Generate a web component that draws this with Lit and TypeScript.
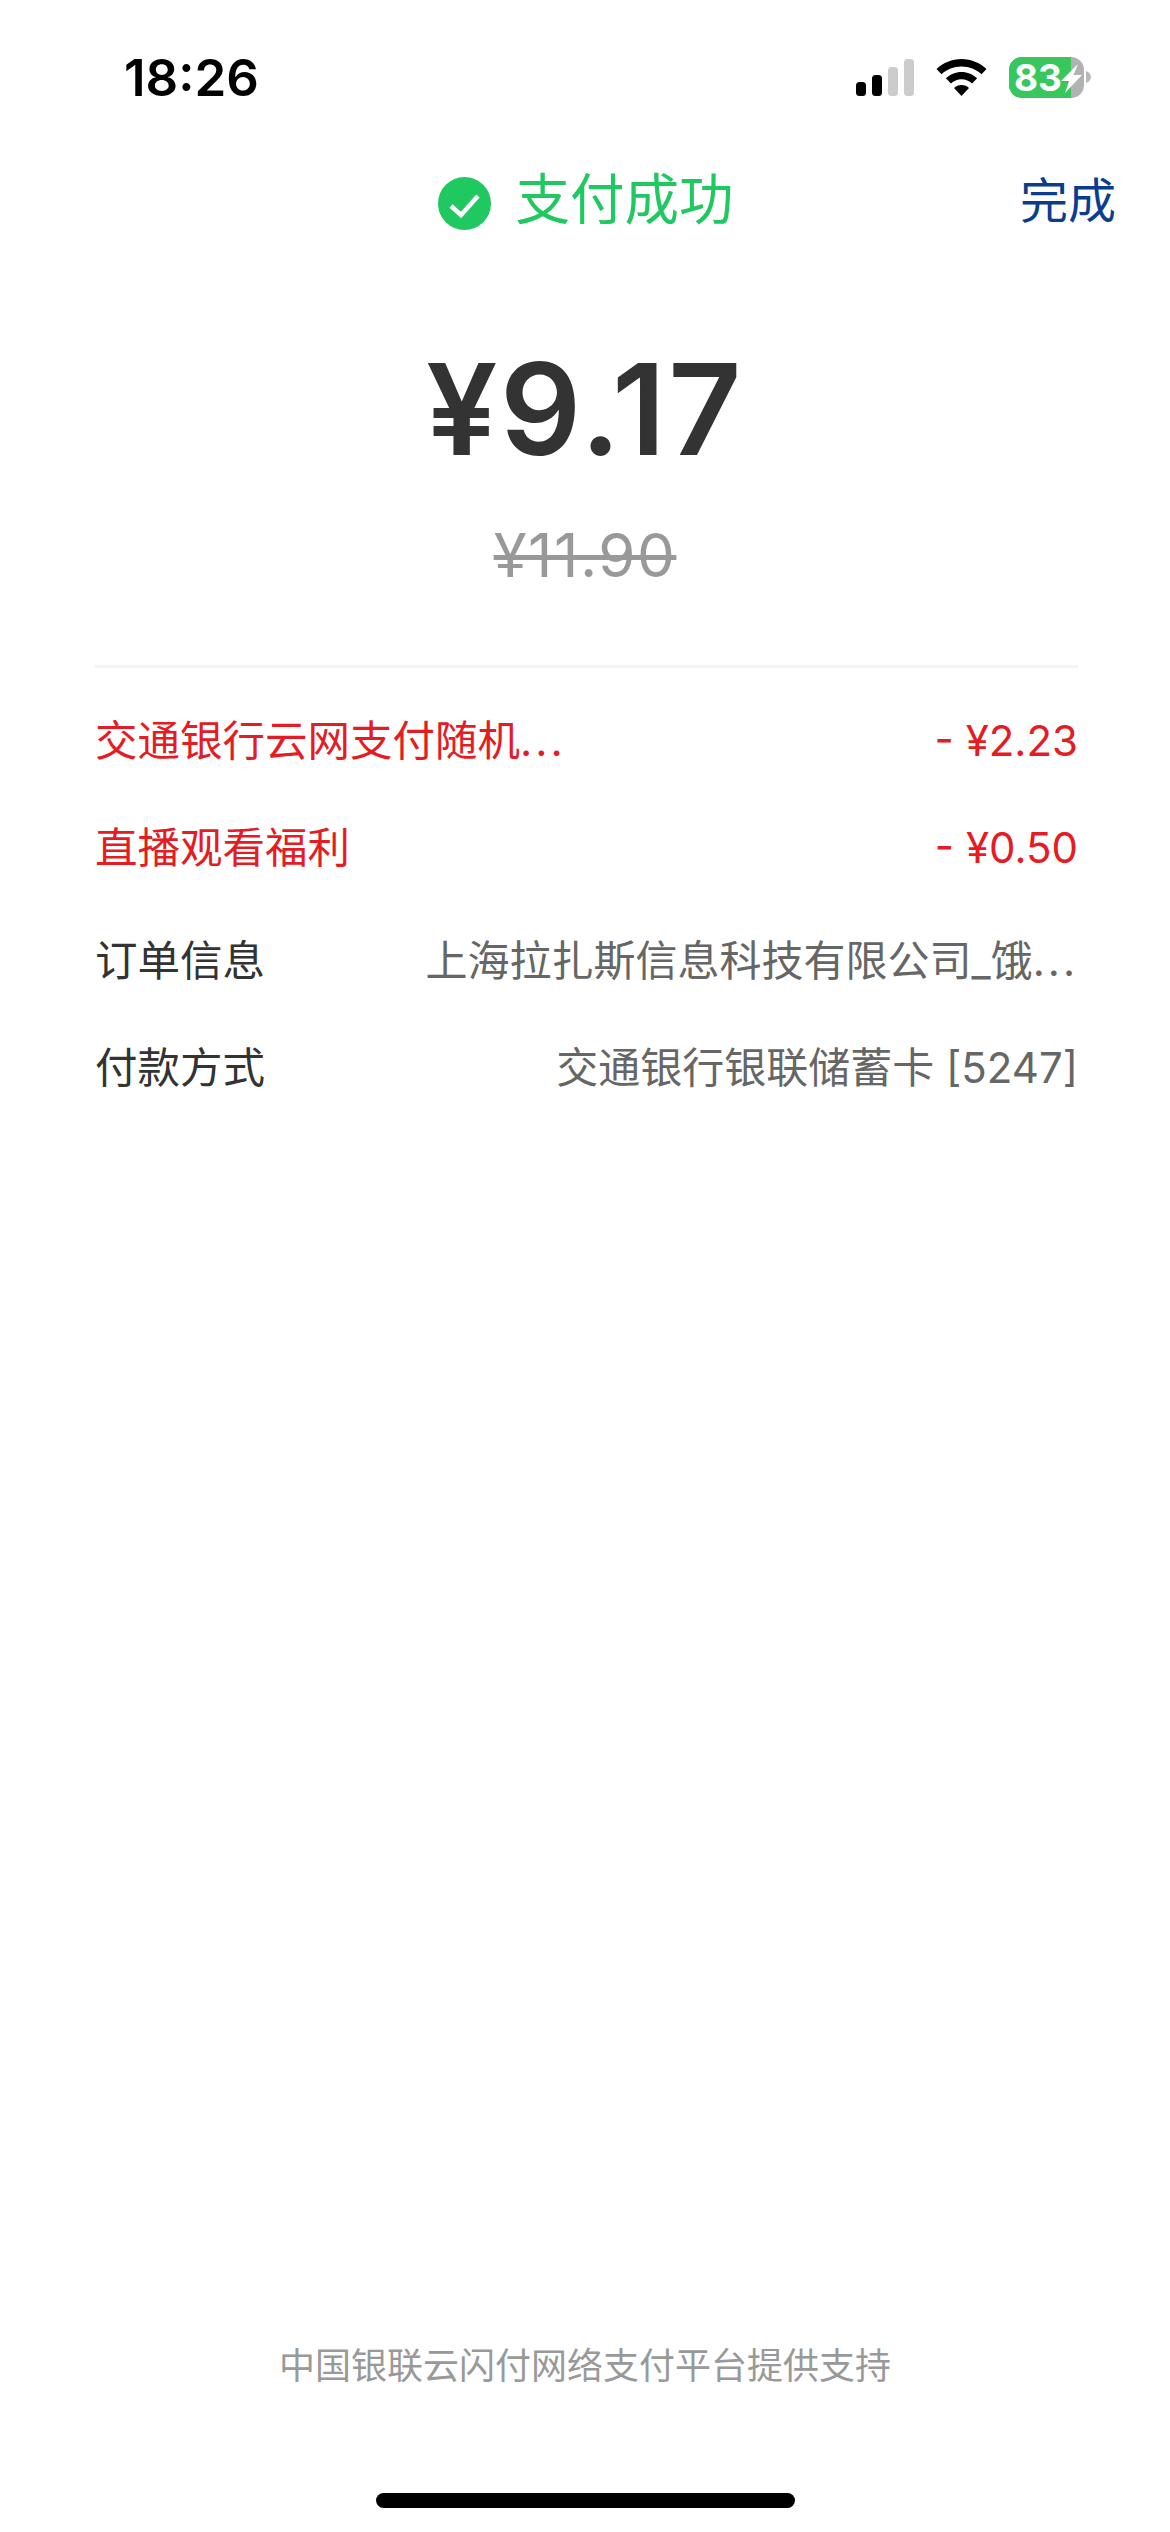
import { LitElement, html, css } from "lit";
import { customElement } from "lit/decorators.js";

interface Row {
  label: string;
  value: string;
  tone: "red" | "info";
  labelCut?: boolean;
  valueCut?: boolean;
}

const rows: Row[] = [
  { label: "交通银行云网支付随机", value: "- ¥2.23", tone: "red", labelCut: true },
  { label: "直播观看福利", value: "- ¥0.50", tone: "red" },
  { label: "订单信息", value: "上海拉扎斯信息科技有限公司_饿", tone: "info", valueCut: true },
  { label: "付款方式", value: "交通银行银联储蓄卡 [5247]", tone: "info" },
];

@customElement("app-root")
export class AppRoot extends LitElement {
  static styles = css`
    :host {
      display: block;
      width: 1170px;
      height: 2532px;
      background: #fff;
      font-family: Inter, "Noto Sans CJK SC", sans-serif;
      overflow: hidden;
    }
    .page { display: flex; flex-direction: column; height: 2532px; }
    .status {
      display: flex;
      justify-content: space-between;
      align-items: flex-start;
      height: 120px;
      padding: 38px 79px 0 124px;
      box-sizing: border-box;
    }
    .time { font-size: 51px; font-weight: 600; color: #000; line-height: 80px; }
    .sys { display: block; margin-top: 18px; }
    .head {
      display: grid;
      grid-template-columns: 1fr auto 1fr;
      align-items: center;
      height: 80px;
      margin-top: 37px;
    }
    .head-main { grid-column: 2; display: flex; align-items: center; gap: 24px; padding-left: 2px; }
    .check { width: 53px; height: 53px; display: block; margin-top: 8px; }
    .title { font-size: 54.5px; color: #1fc860; line-height: 80px; }
    .done {
      justify-self: end;
      padding-right: 54px;
      font-size: 48px;
      line-height: 80px;
      color: #0b3d8f;
      margin-top: 4px;
    }
    .amount {
      margin-top: 97px;
      text-align: center;
      font-size: 127px;
      font-weight: 600;
      line-height: 150px;
      letter-spacing: 2.5px;
      color: #333;
    }
    .orig {
      margin-top: 31px;
      text-align: center;
      font-size: 60px;
      line-height: 80px;
      letter-spacing: 1.5px;
      color: #999;
      text-decoration: line-through;
      text-decoration-thickness: 5px;
    }
    .list {
      margin: 70px 92px 0 95px;
      border-top: 3px solid #f3f3f3;
      padding-top: 43px;
      display: flex;
      flex-direction: column;
      gap: 47px;
    }
    .row {
      display: flex;
      justify-content: space-between;
      align-items: center;
      font-size: 42.5px;
      line-height: 60px;
      white-space: nowrap;
    }
    .val { font-size: 42px; }
    .row.info { color: #666; }
    .row.info .label { color: #333; }
    .row.red { color: #e41c24; }
    .row.info:nth-child(3) { margin-top: 6px; }
    .dots { letter-spacing: 3px; }
    .spacer { flex: 1; }
    .foot { text-align: center; font-size: 36px; line-height: 40px; color: #999; }
    .bar {
      width: 419px;
      height: 15px;
      border-radius: 8px;
      background: #000;
      margin: 107px auto 24px;
    }
  `;

  private statusIcons() {
    return html`<svg class="sys" width="235" height="48" viewBox="856 56 235 48">
      <rect x="856" y="82" width="10" height="14" rx="3.5" fill="#000"></rect>
      <rect x="872" y="75" width="10" height="21" rx="3.5" fill="#000"></rect>
      <rect x="888" y="67" width="10" height="29" rx="3.5" fill="#ccc"></rect>
      <rect x="904" y="59" width="10" height="37" rx="3.5" fill="#ccc"></rect>
      <path d="M961.5 59c-9.500 0-18.200 3.800-25 10l5 5.300c5.200-4.900 12.300-7.800 20-7.800s14.800 2.900 20 7.800l5-5.300c-6.800-6.200-15.500-10-25-10z" fill="#000"></path>
      <path d="M961.500 72c-6 0-11.400 2.400-15.600 6.300l5 5.300c2.800-2.700 6.500-4.300 10.600-4.300s7.800 1.600 10.600 4.300l5-5.300c-4.200-3.900-9.600-6.300-15.600-6.300z" fill="#000"></path>
      <path d="M961.500 85c-3 0-5.700 1.200-7.500 3l7.500 8 7.500-8c-1.800-1.800-4.500-3-7.500-3z" fill="#000"></path>
      <path d="M1086 71c3 1 5 3 5 6s-2 5-5 6z" fill="#b8b8b8"></path>
      <rect x="1009" y="57" width="75" height="41" rx="13" fill="#b2b2b2"></rect>
      <path d="M1022 57h49v41h-49a13 13 0 0 1-13-13v-15a13 13 0 0 1 13-13z" fill="#38c75c"></path>
      <text x="1014" y="90.500" font-size="37" font-weight="700" fill="#fff">83</text>
      <path d="M1078 64l-17 17h8l-4 12 17-18h-8.500z" fill="#fff"></path>
    </svg>`;
  }

  render() {
    return html`<div class="page">
      <div class="status">
        <div class="time">18:26</div>
        ${this.statusIcons()}
      </div>
      <div class="head">
        <div class="head-main">
          <svg class="check" viewBox="0 0 53 53">
            <circle cx="26.500" cy="26.500" r="26.500" fill="#1fc860"></circle>
            <path d="M13 29l10 9 17-19" fill="none" stroke="#fff" stroke-width="4.500"></path>
          </svg>
          <div class="title">支付成功</div>
        </div>
        <div class="done">完成</div>
      </div>
      <div class="amount">¥9.17</div>
      <div class="orig">¥11.90</div>
      <div class="list">
        ${rows.map(
          (r) => html`<div class="row ${r.tone}">
            <span class="label">${r.label}${r.labelCut ? html`<span class="dots">...</span>` : ""}</span>
            <span class="val">${r.value}${r.valueCut ? html`<span class="dots">...</span>` : ""}</span>
          </div>`
        )}
      </div>
      <div class="spacer"></div>
      <div class="foot">中国银联云闪付网络支付平台提供支持</div>
      <div class="bar"></div>
    </div>`;
  }
}
